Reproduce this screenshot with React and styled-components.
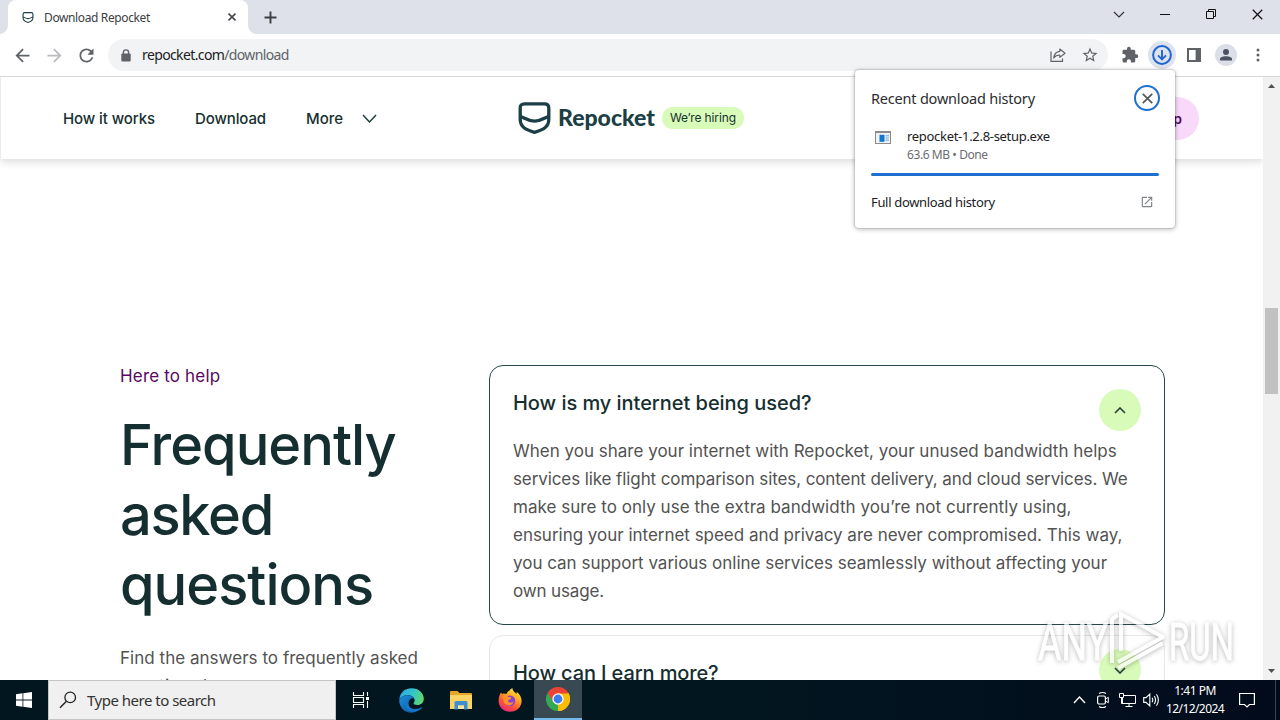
import React from 'react';
import styled, { createGlobalStyle, ThemeProvider } from 'styled-components';
import {
  MdArrowBack,
  MdArrowForward,
  MdExtension,
  MdOpenInNew,
  MdRefresh,
  MdStarBorder,
} from 'react-icons/md';

const theme = {
  fonts: {
    system: '"Noto Sans", "Open Sans", sans-serif',
    site: 'Inter, "Liberation Sans", sans-serif',
  },
  colors: {
    strip: '#dee1e9',
    omnibox: '#f1f3f4',
    icon: '#5f6368',
    blue: '#1f6fd0',
    ink: '#16302f',
    heading: '#152e30',
    body: '#525252',
    green: '#d9fbb9',
    pink: '#f8d9fa',
    purple: '#57095f',
    taskbar: '#021620',
  },
};

const GlobalStyle = createGlobalStyle`
  * {
    box-sizing: border-box;
  }
  body {
    margin: 0;
    background: #fff;
    overflow: hidden;
  }
  svg {
    display: block;
    flex: none;
  }
`;

const Desktop = styled.div`
  position: relative;
  display: flex;
  flex-direction: column;
  width: 1280px;
  height: 720px;
  overflow: hidden;
  background: #fff;
  font-family: ${({ theme }) => theme.fonts.system};
`;

const Text = styled.span`
  white-space: pre;
  letter-spacing: ${({ $spacing }) => $spacing || 0}px;
`;

/* Browser chrome */

const TabStrip = styled.div`
  display: flex;
  height: 34px;
  flex: none;
  padding-left: 8px;
  background: ${({ theme }) => theme.colors.strip};
`;

const Tab = styled.div`
  position: relative;
  display: flex;
  align-items: center;
  width: 240px;
  padding: 0 12px 0 14px;
  border-radius: 8px 8px 0 0;
  background: #fff;
  color: #3c4043;
  font-size: 12px;

  &::before,
  &::after {
    content: '';
    position: absolute;
    bottom: 0;
    width: 8px;
    height: 8px;
  }
  &::before {
    left: -8px;
    background: radial-gradient(circle at 0 0, transparent 7.5px, #fff 8px);
  }
  &::after {
    right: -8px;
    background: radial-gradient(circle at 100% 0, transparent 7.5px, #fff 8px);
  }
`;

const TabTitle = styled(Text)`
  flex: 1;
  margin-left: 10px;
`;

const NewTab = styled.div`
  display: flex;
  align-items: center;
  padding-left: 16px;
`;

const WindowControls = styled.div`
  display: flex;
  margin-left: auto;
`;

const WindowControl = styled.div`
  display: flex;
  align-items: center;
  justify-content: center;
  width: 46px;
  height: 28px;
`;

const Toolbar = styled.div`
  display: flex;
  align-items: center;
  height: 43px;
  flex: none;
  padding: 0 6px;
  border-bottom: 1px solid #d5d7da;
  color: ${({ theme }) => theme.colors.icon};
`;

const ToolButton = styled.div`
  display: flex;
  align-items: center;
  justify-content: center;
  width: 32px;
  height: 28px;
  color: ${({ $muted }) => ($muted ? '#b9bbbe' : 'inherit')};
`;

const Omnibox = styled.div`
  display: flex;
  align-items: center;
  width: 1000px;
  height: 32px;
  margin: 0 6px;
  padding: 0 2px 0 13px;
  border-radius: 16px;
  background: ${({ theme }) => theme.colors.omnibox};
`;

const Url = styled(Text)`
  flex: 1;
  margin-left: 11px;
  padding-bottom: 2px;
  font-size: 14px;
  color: #5f6368;
`;

const Host = styled.span`
  color: #202124;
`;

const Round = styled.div`
  display: flex;
  align-items: center;
  justify-content: center;
  width: ${({ $size }) => $size}px;
  height: ${({ $size }) => $size}px;
  border-radius: 50%;
  background: ${({ $color }) => $color};
  flex: none;
`;

/* Downloads bubble */

const Bubble = styled.div`
  position: absolute;
  left: 855px;
  top: 70px;
  width: 320px;
  height: 158px;
  padding: 15px 16px 0;
  border-radius: 4px;
  background: #fff;
  box-shadow: 0 0 1px 1px rgba(0, 0, 0, 0.1), 0 1px 4px 1px rgba(0, 0, 0, 0.22);
`;

const BubbleRow = styled.div`
  display: flex;
  align-items: center;
  justify-content: space-between;
  height: 26px;
`;

const BubbleTitle = styled(Text)`
  font-size: 14.5px;
  color: #2b2d30;
`;

const CloseRing = styled.div`
  display: flex;
  align-items: center;
  justify-content: center;
  width: 26px;
  height: 26px;
  margin-right: -1px;
  border: 2px solid ${({ theme }) => theme.colors.blue};
  border-radius: 50%;
`;

const Download = styled.div`
  display: flex;
  height: 46px;
  margin-top: 15px;
  padding: 5px 4px 0;
`;

const DownloadInfo = styled.div`
  display: flex;
  flex-direction: column;
  margin: -5px 0 0 16px;
`;

const FileName = styled(Text)`
  font-size: 13px;
  line-height: 20px;
  color: #202124;
`;

const FileStatus = styled(Text)`
  font-size: 12px;
  line-height: 17px;
  color: #6b6e72;
`;

const Progress = styled.div`
  height: 3px;
  margin: 1px 0 13px;
  border-radius: 2px;
  background: ${({ theme }) => theme.colors.blue};
`;

const BubbleLink = styled(Text)`
  font-size: 13px;
  color: #202124;
`;

const LinkIcon = styled.div`
  margin-right: 5px;
  color: #808387;
`;

/* Web page */

const Viewport = styled.div`
  display: flex;
  height: 603px;
  flex: none;
  overflow: hidden;
`;

const Page = styled.div`
  width: 1263px;
  overflow: hidden;
  font-family: ${({ theme }) => theme.fonts.site};
`;

const SiteHeader = styled.header`
  display: grid;
  grid-template-columns: 455px 1fr auto;
  align-items: center;
  height: 82px;
  padding: 0 64px 0 62px;
  border-left: 1px solid #ececec;
  box-shadow: 0 3px 8px rgba(0, 0, 0, 0.14);
  color: ${({ theme }) => theme.colors.ink};
`;

const Nav = styled.nav`
  display: flex;
  align-items: center;
  font-size: 15px;
  font-weight: 500;
`;

const NavItem = styled(Text)`
  margin-right: ${({ $gap }) => $gap}px;
`;

const Brand = styled.div`
  display: flex;
  align-items: center;
`;

const BrandName = styled(Text)`
  margin: 0 7px 0 7px;
  padding-bottom: 2px;
  font: 900 23px Lato, sans-serif;
  color: #1b3f45;
`;

const Hiring = styled(Text)`
  height: 22px;
  padding: 0 8px;
  border-radius: 11px;
  background: ${({ theme }) => theme.colors.green};
  font-size: 12px;
  line-height: 22px;
`;

const SignUp = styled(Text)`
  height: 43px;
  padding: 0 17px;
  border-radius: 22px;
  background: ${({ theme }) => theme.colors.pink};
  color: ${({ theme }) => theme.colors.purple};
  font-size: 14px;
  font-weight: 600;
  line-height: 43px;
`;

const Faq = styled.section`
  display: grid;
  grid-template-columns: 369px 676px;
  padding: 203px 0 0 120px;
`;

const Intro = styled.div`
  display: flex;
  flex-direction: column;
`;

const Eyebrow = styled(Text)`
  color: ${({ theme }) => theme.colors.purple};
  font-size: 17px;
  line-height: 28px;
`;

const Heading = styled.h2`
  display: flex;
  flex-direction: column;
  margin: 20px 0 24px;
  color: ${({ theme }) => theme.colors.heading};
  font-size: 56px;
  font-weight: 500;
  line-height: 70px;
`;

const BodyLine = styled(Text)`
  display: block;
  color: ${({ theme }) => theme.colors.body};
  font-size: 17px;
  line-height: 28px;
`;

const Cards = styled.div`
  display: flex;
  flex-direction: column;
  gap: 10px;
  padding-top: 3px;
`;

const Card = styled.article`
  height: ${({ $open }) => ($open ? 260 : 70)}px;
  padding: 23px;
  border: 1px solid ${({ $open }) => ($open ? '#29474a' : '#e6e8e8')};
  border-radius: 14px;
`;

const Question = styled.div`
  display: flex;
  justify-content: space-between;
  height: 48px;
  color: ${({ theme }) => theme.colors.heading};
  font-size: 20px;
  font-weight: 500;
  line-height: 28px;
`;

const Toggle = styled(Round)`
  margin-top: ${({ $open }) => ($open ? 0 : -10)}px;
`;

const ScrollBar = styled.div`
  display: flex;
  flex-direction: column;
  align-items: center;
  width: 17px;
  padding: 7px 0 7px;
  background: #f1f1f1;
`;

const Thumb = styled.div`
  width: 13px;
  height: 86px;
  margin: 220px 0 auto;
  background: #c1c1c1;
`;

const Watermark = styled.svg`
  position: absolute;
  left: 1032px;
  top: 604px;
  filter: drop-shadow(0 1px 2.5px rgba(0, 0, 0, 0.4));
  opacity: 0.72;
  font-family: Roboto, sans-serif;
`;

/* Windows taskbar */

const Taskbar = styled.footer`
  position: relative;
  display: flex;
  height: 40px;
  flex: none;
  background: linear-gradient(90deg, ${({ theme }) => theme.colors.taskbar} 60%, #020b1c);
`;

const TaskCell = styled.div`
  display: flex;
  align-items: center;
  justify-content: center;
  width: ${({ $width }) => $width || 49}px;
  border-bottom: ${({ $active }) => ($active ? '2px solid #76b9ed' : '0')};
  background: ${({ $active }) => ($active ? '#394952' : 'transparent')};
`;

const Search = styled.div`
  display: flex;
  align-items: center;
  width: 288px;
  padding-left: 10px;
  border: 1px solid #c4c4c4;
  background: #f0f0f0;
  color: #333;
  font-size: 15px;
`;

const SearchText = styled(Text)`
  margin-left: 10px;
`;

const Tray = styled.div`
  display: flex;
  align-items: center;
  margin-left: auto;
  padding-right: 8px;
  border-right: 1px solid #39424e;
  margin-right: 4px;
`;

const TrayIcon = styled.div`
  display: flex;
  justify-content: center;
  width: 24px;
`;

const Clock = styled.div`
  display: flex;
  flex-direction: column;
  align-items: center;
  width: 64px;
  color: #fff;
  font-size: 12px;
  line-height: 18px;
`;

const strokeProps = { fill: 'none', stroke: 'currentColor' };

const Cross = ({ size, width, color }) => (
  <svg width={size} height={size} viewBox="0 0 10 10" color={color}>
    <path d="M.7.7l8.6 8.6M9.3.7L.7 9.3" {...strokeProps} strokeWidth={width} />
  </svg>
);

const Chevron = ({ width, height, stroke = 1.4, up, color = '#20403f' }) => (
  <svg width={width} height={height} viewBox={`0 0 ${width} ${height}`} color={color}>
    <path
      d={
        up
          ? `M1 ${height - 1}L${width / 2} 1L${width - 1} ${height - 1}`
          : `M1 1L${width / 2} ${height - 1}L${width - 1} 1`
      }
      {...strokeProps}
      strokeWidth={stroke}
    />
  </svg>
);

const PocketLogo = ({ width, height, stroke }) => (
  <svg width={width} height={height} viewBox="0 0 32 32" color="#1b3f45">
    <path
      d="M6 1.8H26Q30.3 1.8 30.3 6V17.5C30.3 25.5 24 28 16 30.3C8 28 1.7 25.5 1.7 17.5V6Q1.7 1.8 6 1.8Z"
      {...strokeProps}
      strokeWidth={stroke}
    />
    <path d="M1.7 14.2C8 17 10 19.2 16 19.2S24 17 30.3 14.2" {...strokeProps} strokeWidth={stroke} />
  </svg>
);

const LockIcon = () => (
  <svg width="10" height="13" viewBox="0 0 10 13">
    <path d="M2.400 5V3.500a2.600 2.600 0 0 1 5.200 0V5" {...strokeProps} strokeWidth="1.400" />
    <rect x=".3" y="4.600" width="9.400" height="7.900" rx="1" fill="currentColor" />
  </svg>
);

const ShareIcon = () => (
  <svg width="16" height="16" viewBox="0 0 16 16">
    <path d="M1 4.5V14.3H12.5V11.5" {...strokeProps} strokeWidth="1.2" />
    <path
      d="M9.8 2L15 6.2L9.8 10.4V8C7.3 8 5.3 8.8 3.7 11C4.2 7.2 6.4 4.8 9.8 4.4Z"
      {...strokeProps}
      strokeWidth="1.2"
      strokeLinejoin="round"
    />
  </svg>
);

const DownloadIcon = () => (
  <svg width="20" height="20" viewBox="0 0 20 20" color="#1f66d0">
    <circle cx="10" cy="10" r="8.9" {...strokeProps} strokeWidth="2" />
    <path d="M10 5V14.2M6 10.3L10 14.3L14 10.3" {...strokeProps} strokeWidth="1.9" />
  </svg>
);

const SidePanelIcon = () => (
  <svg width="14" height="14" viewBox="0 0 14 14">
    <path d="M0 0H14V14H0ZM2 2V12H8.6V2Z" fill="currentColor" fillRule="evenodd" />
  </svg>
);

const PersonIcon = () => (
  <svg width="14" height="14" viewBox="0 0 14 14" color="#4a5160">
    <circle cx="7" cy="4" r="3" fill="currentColor" />
    <path d="M1 12.4V11C1 9 4.5 8.2 7 8.2S13 9 13 11V12.4Z" fill="currentColor" />
  </svg>
);

const DotsIcon = () => (
  <svg width="4" height="14" viewBox="0 0 4 14" fill="currentColor">
    <circle cx="2" cy="1.9" r="1.5" />
    <circle cx="2" cy="7" r="1.5" />
    <circle cx="2" cy="12.1" r="1.5" />
  </svg>
);

const InstallerIcon = () => (
  <svg width="16" height="13" viewBox="0 0 16 13">
    <rect x=".5" y=".5" width="15" height="12" fill="#f1f1f1" stroke="#8c8c8c" />
    <path d="M0 1H16" stroke="#8c8c8c" strokeWidth="2" />
    <rect x="4.5" y="3.8" width="5" height="7" fill="#0f78d4" />
    <path d="M10.5 4.8H14M10.5 7H14M10.5 9.2H14" stroke="#6ca4d8" />
  </svg>
);

const WindowsIcon = () => (
  <svg width="16" height="16" viewBox="0 0 16 16" fill="#fff">
    <path d="M0 2.2L6.5 1.3V7.5H0ZM7.3 1.2L16 0V7.5H7.3ZM0 8.4H6.5V14.7L0 13.8ZM7.3 8.4H16V16L7.3 14.8Z" />
  </svg>
);

const SearchIcon = () => (
  <svg width="18" height="18" viewBox="0 0 18 18" color="#222">
    <circle cx="11.2" cy="6.4" r="5.3" {...strokeProps} strokeWidth="1.3" />
    <path d="M7.4 10.2L1 16.8" {...strokeProps} strokeWidth="1.4" />
  </svg>
);

const TaskViewIcon = () => (
  <svg width="20" height="16" viewBox="0 0 20 16" color="#fff">
    <path d="M1.5 0V3.5H11.5V0M1.5 16V12.5H11.5V16M1.5 5.5H11.5V10.5H1.5ZM15.5 0V4M15.5 9V16" {...strokeProps} strokeWidth="1.1" />
    <rect x="14" y="5" width="3" height="3" fill="currentColor" />
  </svg>
);

const EdgeIcon = () => (
  <svg width="25" height="25" viewBox="0 0 24 24">
    <defs>
      <linearGradient id="edge-top" x1="0" y1=".3" x2="1" y2=".5">
        <stop offset="0" stopColor="#2aa8e4" />
        <stop offset=".55" stopColor="#33c6c8" />
        <stop offset="1" stopColor="#62d86a" />
      </linearGradient>
      <linearGradient id="edge-side" x1="0" y1="0" x2="1" y2="1">
        <stop offset="0" stopColor="#1b8fdc" />
        <stop offset="1" stopColor="#0c4f9c" />
      </linearGradient>
    </defs>
    <path d="M.3 11C1 4 6 .3 12 .3C19 .3 23.8 5 23.8 10.3C23.8 14 21 16.3 17.8 16.3C15.3 16.3 14 15.5 14 14.6C14 14 15 13.4 15 11.7C15 9 12 7 8.5 7C4.5 7 1.5 8.8 .3 11Z" fill="url(#edge-top)" />
    <path d="M.2 11.5C2 8 5.5 7 8.5 7C11.5 7 13.6 8.3 14.5 10C11.5 9 9 12 9 14.5C9 19.5 14 22.3 19.5 20C17.5 22.5 14.7 23.8 12 23.8C5.5 23.8 0 18.5 .2 11.5Z" fill="url(#edge-side)" />
    <path d="M9.2 12.5C7.5 18.5 13 22.5 21 18.6C22 18.2 22.3 18.6 21.8 19.2C17 25 6.5 23.5 6.5 16.5C6.5 14.5 7.5 13 9.2 12.5Z" fill="#1378c8" />
  </svg>
);

const ExplorerIcon = () => (
  <svg width="22" height="19" viewBox="0 0 22 19">
    <path d="M0 1Q0 0 1 0H7.5L9.5 2H21Q22 2 22 3V18H0Z" fill="#e6a52b" />
    <path d="M0 4H22V18H0Z" fill="#fcd466" />
    <path d="M4.500 18.500V11.500Q4.500 10 6 10H16Q17.500 10 17.500 11.500V18.500H14V14.500H8V18.500Z" fill="#3d8fd0" />
    <path d="M8 14.500H14V18H8Z" fill="#f7e3a1" />
  </svg>
);

const FirefoxIcon = () => (
  <svg width="24" height="24" viewBox="0 0 24 24">
    <defs>
      <linearGradient id="fx" x1=".8" y1="0" x2=".25" y2="1">
        <stop offset="0" stopColor="#fff04a" />
        <stop offset=".35" stopColor="#ffac1f" />
        <stop offset=".65" stopColor="#ff5a35" />
        <stop offset="1" stopColor="#e5247c" />
      </linearGradient>
    </defs>
    <path d="M3 4.5C3.3 5 3.8 5.5 4.2 5.9C5.5 5.3 7.5 5.5 8.5 6C9 4 10.5 3 11.5 2.5C12.5 1 13.5 .6 14.3 0C14.5 3 17 4 18.5 6C18.8 5 18.6 4.3 18.5 3.7C22 6 23.6 9.5 23.6 13C23.6 19.2 18.5 23.8 12 23.8C5.5 23.8 .6 19 .6 13C.6 9.5 1.5 6.5 3 4.5Z" fill="url(#fx)" />
    <circle cx="12" cy="12.8" r="5.3" fill="#8a3fd6" />
    <path d="M4.5 8.5C7 6.5 9.5 7.5 10.5 9C13 9 13.5 9.7 13.2 10.5C12.5 11.7 10.5 11.5 10 12.5C10 14.5 12.5 15.5 15.5 13.8C14.5 18 8 19 6 14.5Z" fill="#ff9226" />
  </svg>
);

const ChromeIcon = () => (
  <svg width="24" height="24" viewBox="0 0 24 24">
    <path d="M12 12L1.6 6A12 12 0 0 1 22.4 6Z" fill="#ea4335" />
    <path d="M12 12L22.4 6A12 12 0 0 1 12 24Z" fill="#fbbc04" />
    <path d="M12 12L12 24A12 12 0 0 1 1.6 6Z" fill="#34a853" />
    <path d="M12 6.5H22.7A12 12 0 0 1 12 24L16.8 14.7Z" fill="#fbbc04" />
    <path d="M1.6 6L7.2 14.7L12 6.5Z" fill="#ea4335" />
    <circle cx="12" cy="12" r="5.7" fill="#fff" />
    <circle cx="12" cy="12" r="4.4" fill="#3b7ded" />
  </svg>
);

const CameraIcon = () => (
  <svg width="14" height="18" viewBox="0 0 14 18" color="#fff">
    <path d="M3 2.6Q6.5 .4 10 2.6M3 15.4Q6.5 17.6 10 15.4" {...strokeProps} strokeWidth="1.2" />
    <rect x="1.6" y="5" width="7.8" height="8" rx="1.5" {...strokeProps} strokeWidth="1.2" />
    <path d="M9.5 8L12.3 6.3V11.7L9.5 10Z" {...strokeProps} />
  </svg>
);

const NetworkIcon = () => (
  <svg width="17" height="16" viewBox="0 0 17 16" color="#fff">
    <path d="M5 3.5H16.5V11.5H3.5V6M10 11.5V14.5M6.5 14.5H13.5M.5 1.5H4.5V5.5H.5ZM2.5 5.5V11.5H5" {...strokeProps} />
  </svg>
);

const VolumeIcon = () => (
  <svg width="17" height="16" viewBox="0 0 17 16" color="#fff">
    <path d="M.7 5.6H3L6.8 2V14L3 10.4H.7ZM9 5.7Q10.6 8 9 10.3M11.3 4Q13.8 8 11.3 12M13.5 2.3Q17.2 8 13.5 13.7" {...strokeProps} strokeWidth="1.1" />
  </svg>
);

const NoticeIcon = () => (
  <svg width="16" height="16" viewBox="0 0 16 16" color="#fff">
    <path d="M.6 1.5H15.4V12.5H10.5L8 15L5.5 12.5H.6Z" {...strokeProps} strokeWidth="1.2" />
  </svg>
);

const ScrollArrow = ({ up }) => (
  <svg width="7" height="4" viewBox="0 0 7 4" fill="#505050">
    <path d={up ? 'M0 4L3.5 0L7 4Z' : 'M0 0L3.5 4L7 0Z'} />
  </svg>
);

const headingLines = [
  ['Frequently', -1],
  ['asked', -1.3],
  ['questions', -1],
];

const answerLines = [
  ['When you share your internet with Repocket, your unused bandwidth helps', 0],
  ['services like flight comparison sites, content delivery, and cloud services. We', -0.1],
  ['make sure to only use the extra bandwidth you’re not currently using,', 0.03],
  ['ensuring your internet speed and privacy are never compromised. This way,', -0.02],
  ['you can support various online services seamlessly without affecting your', -0.01],
  ['own usage.', -0.15],
];

const BrowserChrome = () => (
  <>
    <TabStrip>
      <Tab>
        <PocketLogo width={12} height={11} stroke={3.2} />
        <TabTitle $spacing={-0.38}>Download Repocket</TabTitle>
        <Cross size={8} width={2} color="#45484d" />
      </Tab>
      <NewTab>
        <svg width="13" height="13" viewBox="0 0 13 13" color="#3c4043">
          <path d="M6.5 .5V12.5M.5 6.5H12.5" {...strokeProps} strokeWidth="1.9" />
        </svg>
      </NewTab>
      <WindowControls>
        <WindowControl>
          <Chevron width={12} height={7} stroke={1.2} color="#333" />
        </WindowControl>
        <WindowControl>
          <svg width="10" height="1"><rect width="10" height="1" fill="#111" /></svg>
        </WindowControl>
        <WindowControl>
          <svg width="10" height="10" viewBox="0 0 10 10" color="#111">
            <path d="M.5 2.5H7.5V9.5H.5ZM2.5 2.5V.5H9.5V7.5H7.5" {...strokeProps} />
          </svg>
        </WindowControl>
        <WindowControl>
          <Cross size={11} width={1.1} color="#111" />
        </WindowControl>
      </WindowControls>
    </TabStrip>
    <Toolbar>
      <ToolButton><MdArrowBack size={21} /></ToolButton>
      <ToolButton $muted><MdArrowForward size={21} /></ToolButton>
      <ToolButton><MdRefresh size={21} /></ToolButton>
      <Omnibox>
        <LockIcon />
        <Url $spacing={-0.62}>
          <Host>repocket.com</Host>/download
        </Url>
        <ToolButton><ShareIcon /></ToolButton>
        <ToolButton><MdStarBorder size={18} /></ToolButton>
      </Omnibox>
      <ToolButton><MdExtension size={18} /></ToolButton>
      <ToolButton>
        <Round $size={28} $color="#dde2ee"><DownloadIcon /></Round>
      </ToolButton>
      <ToolButton><SidePanelIcon /></ToolButton>
      <ToolButton>
        <Round $size={22} $color="#dcdfe8"><PersonIcon /></Round>
      </ToolButton>
      <ToolButton><DotsIcon /></ToolButton>
    </Toolbar>
  </>
);

const DownloadsBubble = () => (
  <Bubble>
    <BubbleRow>
      <BubbleTitle $spacing={-0.2}>Recent download history</BubbleTitle>
      <CloseRing><Cross size={11} width={1.6} color="#55585c" /></CloseRing>
    </BubbleRow>
    <Download>
      <InstallerIcon />
      <DownloadInfo>
        <FileName $spacing={-0.3}>repocket-1.2.8-setup.exe</FileName>
        <FileStatus $spacing={-0.42}>63.6 MB • Done</FileStatus>
      </DownloadInfo>
    </Download>
    <Progress />
    <BubbleRow>
      <BubbleLink $spacing={-0.33}>Full download history</BubbleLink>
      <LinkIcon><MdOpenInNew size={14} /></LinkIcon>
    </BubbleRow>
  </Bubble>
);

const SitePage = () => (
  <Viewport>
    <Page>
      <SiteHeader>
        <Nav>
          <NavItem $gap={40} $spacing={-0.09}>How it works</NavItem>
          <NavItem $gap={40} $spacing={-0.1}>Download</NavItem>
          <NavItem $gap={19}>More</NavItem>
          <Chevron width={15} height={9} stroke={1.5} />
        </Nav>
        <Brand>
          <PocketLogo width={33} height={32} stroke={3.3} />
          <BrandName>Repocket</BrandName>
          <Hiring $spacing={-0.13}>We’re hiring</Hiring>
        </Brand>
        <SignUp>Sign Up</SignUp>
      </SiteHeader>
      <Faq>
        <Intro>
          <Eyebrow $spacing={0.17}>Here to help</Eyebrow>
          <Heading>
            {headingLines.map(([line, spacing]) => (
              <Text key={line} $spacing={spacing}>{line}</Text>
            ))}
          </Heading>
          <BodyLine $spacing={0.03}>Find the answers to frequently asked</BodyLine>
          <BodyLine>questions here.</BodyLine>
        </Intro>
        <Cards>
          <Card $open>
            <Question>
              <Text $spacing={-0.04}>How is my internet being used?</Text>
              <Toggle $size={42} $color="#d9fbb9" $open>
                <Chevron width={12} height={7} stroke={1.6} up />
              </Toggle>
            </Question>
            {answerLines.map(([line, spacing]) => (
              <BodyLine key={line} $spacing={spacing}>{line}</BodyLine>
            ))}
          </Card>
          <Card>
            <Question>
              <Text $spacing={-0.12}>How can I earn more?</Text>
              <Toggle $size={42} $color="#d9fbb9">
                <Chevron width={12} height={7} stroke={1.6} />
              </Toggle>
            </Question>
          </Card>
        </Cards>
      </Faq>
    </Page>
    <ScrollBar>
      <ScrollArrow up />
      <Thumb />
      <ScrollArrow />
    </ScrollBar>
  </Viewport>
);

const AnyRun = () => (
  <Watermark width="208" height="76" viewBox="0 0 208 76" fill="#fff">
    <g stroke="#fff" strokeWidth=".8">
      <text x="6" y="56" fontSize="51" textLength="70" lengthAdjust="spacingAndGlyphs">ANY</text>
      <text x="137" y="56" fontSize="51" textLength="65" lengthAdjust="spacingAndGlyphs">RUN</text>
    </g>
    <path
      d="M80 59V15L86 11M89 47V10L131 33L86 58M86 64L131 39"
      fill="none"
      stroke="#fff"
      strokeWidth="4"
      strokeLinejoin="round"
    />
  </Watermark>
);

const WindowsTaskbar = () => (
  <Taskbar>
    <TaskCell $width={48}><WindowsIcon /></TaskCell>
    <Search>
      <SearchIcon />
      <SearchText $spacing={-0.5}>Type here to search</SearchText>
    </Search>
    <TaskCell $width={51}><TaskViewIcon /></TaskCell>
    <TaskCell><EdgeIcon /></TaskCell>
    <TaskCell><ExplorerIcon /></TaskCell>
    <TaskCell><FirefoxIcon /></TaskCell>
    <TaskCell $width={48} $active><ChromeIcon /></TaskCell>
    <Tray>
      <TrayIcon><Chevron width={13} height={8} stroke={1.3} up color="#fff" /></TrayIcon>
      <TrayIcon><CameraIcon /></TrayIcon>
      <TrayIcon><NetworkIcon /></TrayIcon>
      <TrayIcon><VolumeIcon /></TrayIcon>
      <Clock>
        <Text $spacing={-0.5}>1:41 PM</Text>
        <Text $spacing={-0.6}>12/12/2024</Text>
      </Clock>
      <TaskCell $width={40}><NoticeIcon /></TaskCell>
    </Tray>
  </Taskbar>
);

const App = () => (
  <ThemeProvider theme={theme}>
    <GlobalStyle />
    <Desktop>
      <BrowserChrome />
      <SitePage />
      <WindowsTaskbar />
      <AnyRun />
      <DownloadsBubble />
    </Desktop>
  </ThemeProvider>
);

export default App;
